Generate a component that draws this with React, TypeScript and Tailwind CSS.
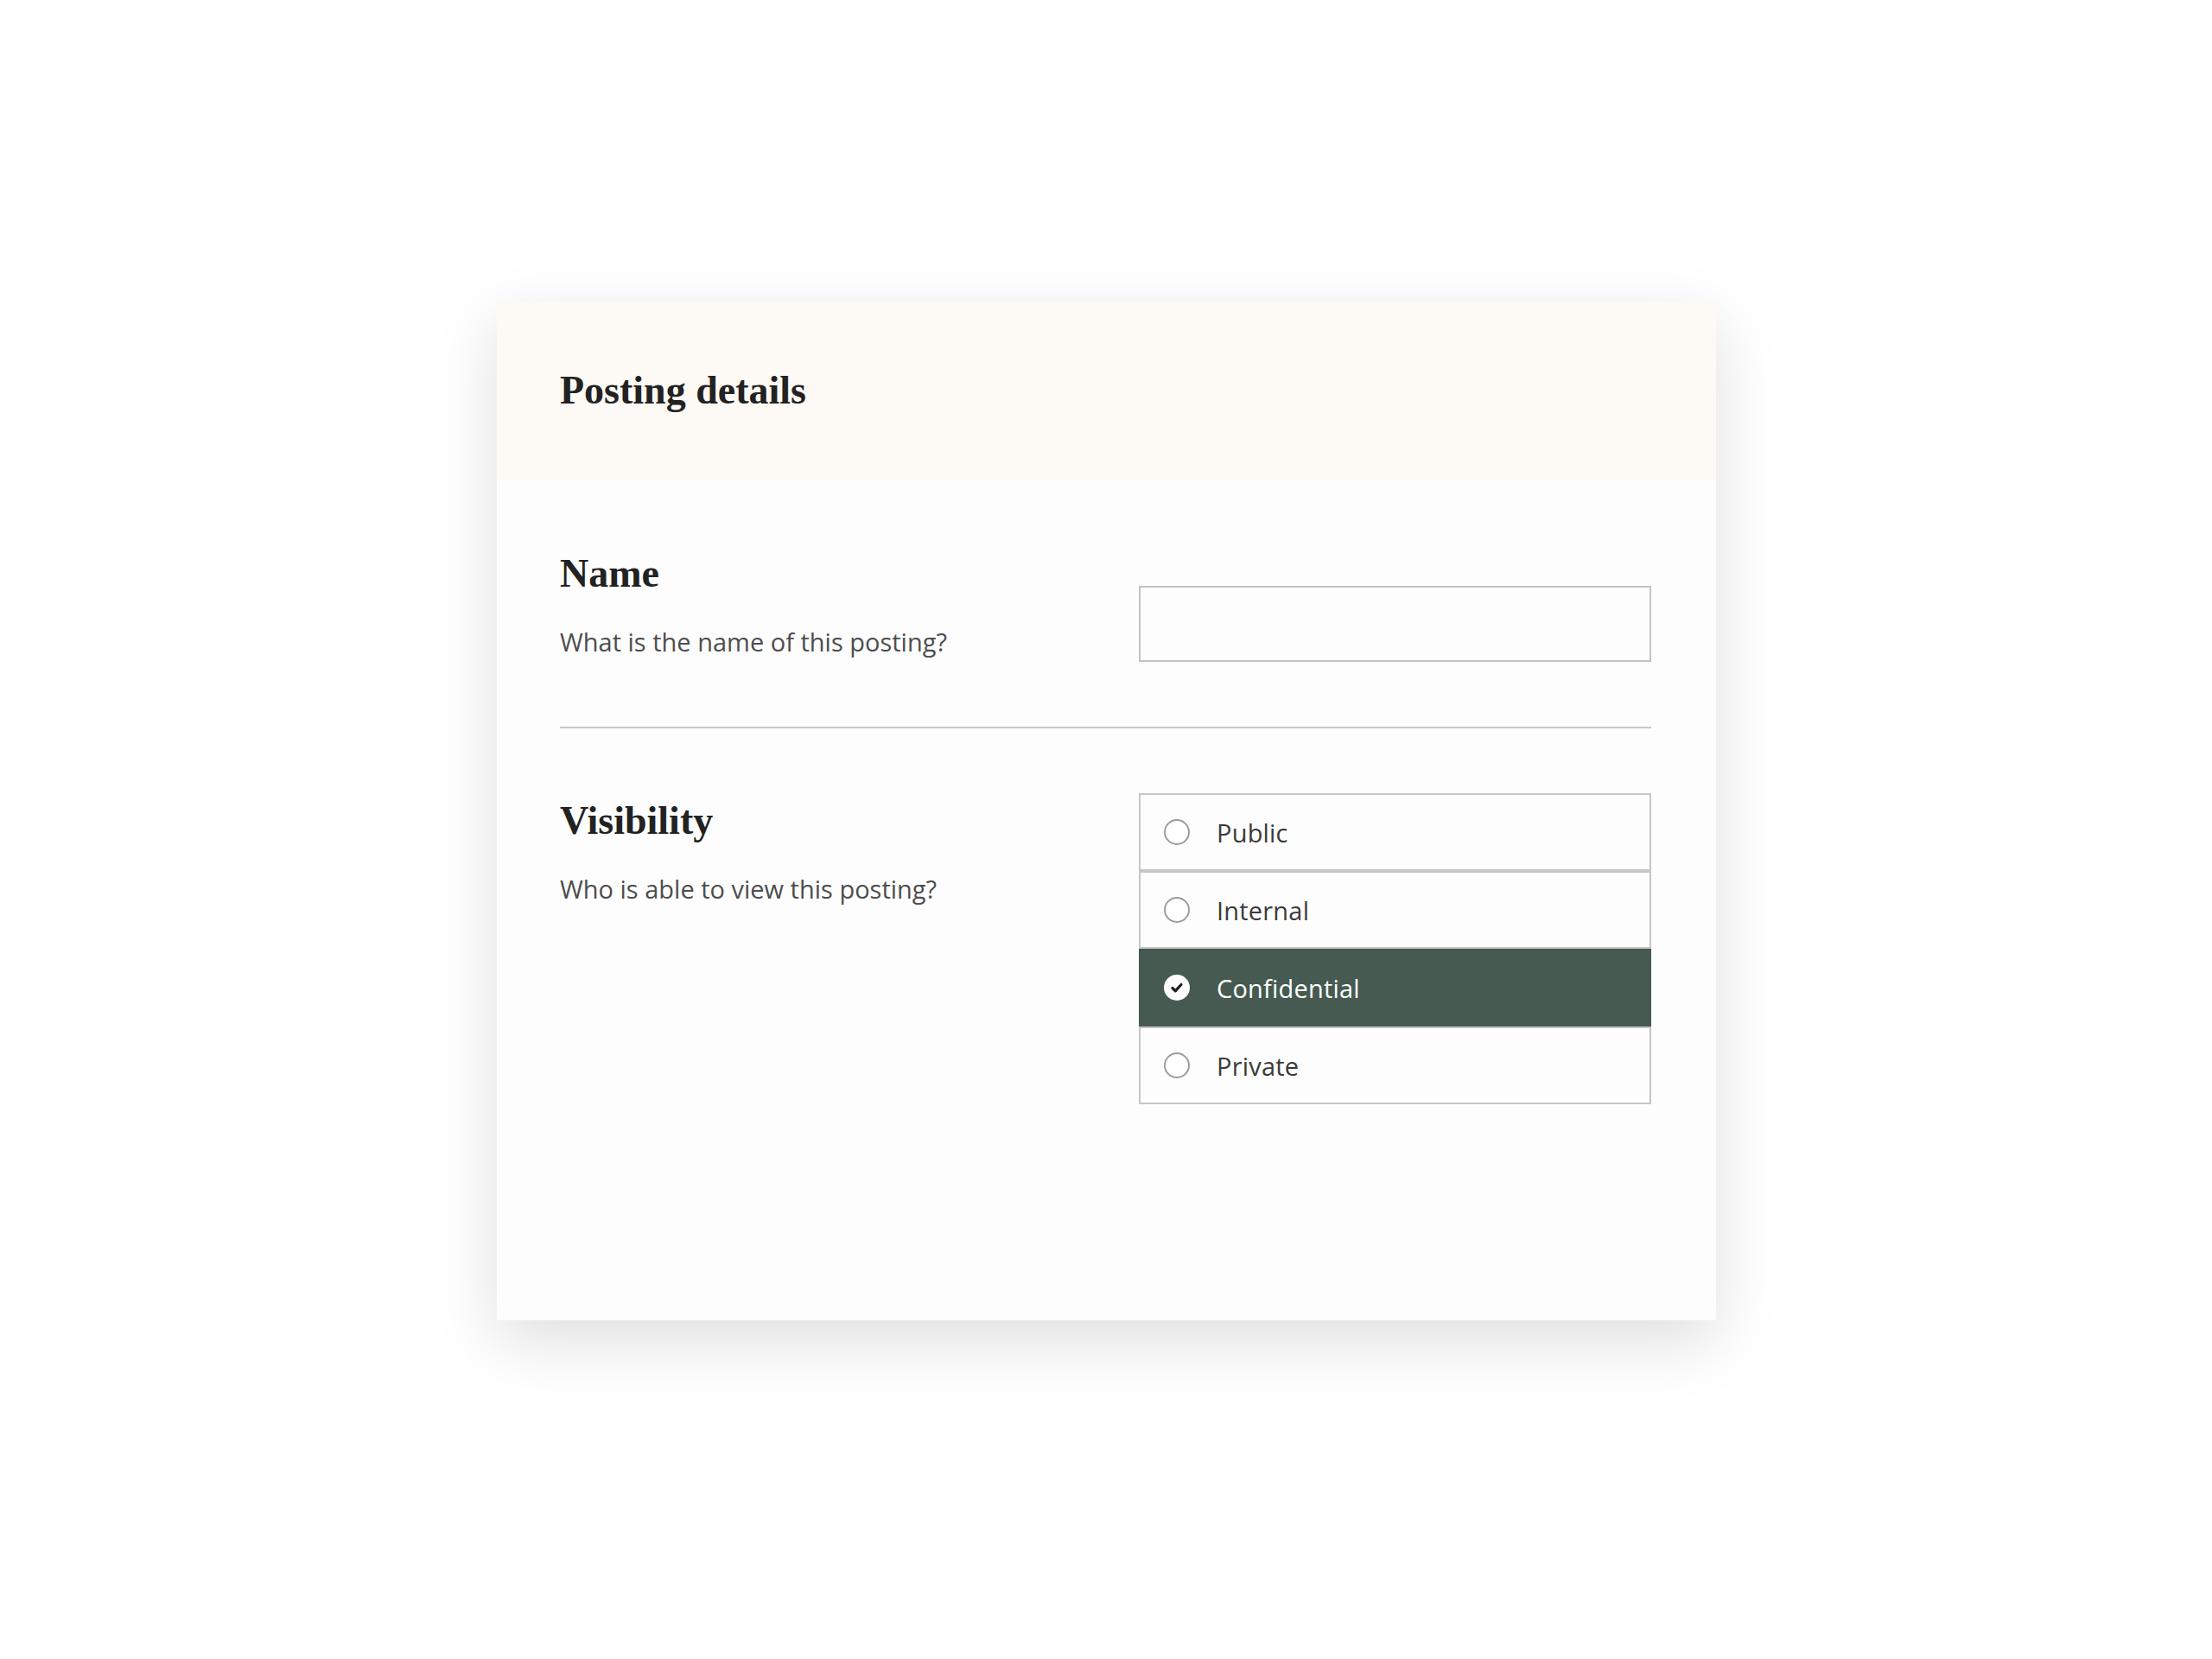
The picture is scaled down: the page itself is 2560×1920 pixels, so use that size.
import React from "react";

const serif = "font-['Liberation_Serif',serif]";
const sans = "font-['Open_Sans','Liberation_Sans',sans-serif]";

const options = ["Public", "Internal", "Confidential", "Private"];

export default function App() {
  const selected = "Confidential";

  return (
    <div className="min-h-screen w-full bg-white pt-[349px]">
      <div className="ml-[575px] w-[1411px] bg-[#fdfdfd] shadow-[0_24px_70px_rgba(0,0,0,0.13)]">
        {/* Header */}
        <div className="flex h-[206px] items-center bg-[#fdf9f4] px-[73px]">
          <h1 className={`${serif} text-[46px] font-bold leading-none text-[#222222]`}>
            Posting details
          </h1>
        </div>

        {/* Body */}
        <div className="pl-[73px] pr-[75px] pb-[250px]">
          {/* Name */}
          <div className="flex border-b-2 border-[#c6c6c6] pb-[75px]">
            <div className="w-[670px] pt-[86px]">
              <h2 className={`${serif} text-[46px] font-bold leading-none text-[#222222]`}>
                Name
              </h2>
              <p className={`${sans} mt-[39px] text-[29px] leading-[34px] text-[#4d4d4d]`}>
                What is the name of this posting?
              </p>
            </div>
            <div className="flex-1 pt-[123px]">
              <input
                type="text"
                className="block h-[88px] w-full border-2 border-[#c3c3c3] bg-[#fdfdfd] outline-none"
              />
            </div>
          </div>

          {/* Visibility */}
          <div className="flex pt-[75px]">
            <div className="w-[670px] pt-[9px]">
              <h2 className={`${serif} text-[46px] font-bold leading-none text-[#222222]`}>
                Visibility
              </h2>
              <p className={`${sans} mt-[39px] text-[29px] leading-[34px] text-[#4d4d4d]`}>
                Who is able to view this posting?
              </p>
            </div>
            <div className="flex flex-1 flex-col">
              {options.map((opt) => (
                <RadioRow key={opt} label={opt} checked={opt === selected} />
              ))}
            </div>
          </div>
        </div>
      </div>
    </div>
  );
}

function RadioRow({ label, checked }: { label: string; checked: boolean }) {
  return (
    <div
      className={
        checked
          ? "flex h-[90px] items-center gap-[31px] border-2 border-[#465a52] bg-[#465a52] px-[27px]"
          : "flex h-[90px] items-center gap-[31px] border-2 border-[#c6c6c6] bg-[#fdfdfd] px-[27px]"
      }
    >
      {checked ? (
        <span className="flex h-[30px] w-[30px] items-center justify-center rounded-full bg-white">
          <svg viewBox="0 0 16 16" className="h-[16px] w-[16px]">
            <path
              d="M3 8.5 L6.3 11.8 L13 4.5"
              fill="none"
              stroke="#1f1f1f"
              strokeWidth="3.2"
              strokeLinecap="round"
              strokeLinejoin="round"
            />
          </svg>
        </span>
      ) : (
        <span className="h-[30px] w-[30px] rounded-full border-2 border-[#9c9c9c] bg-white" />
      )}
      <span
        className={`${sans} text-[29px] leading-none tracking-[0.2px] ${checked ? "text-white" : "text-[#3a3a3a]"}`}
      >
        {label}
      </span>
    </div>
  );
}
